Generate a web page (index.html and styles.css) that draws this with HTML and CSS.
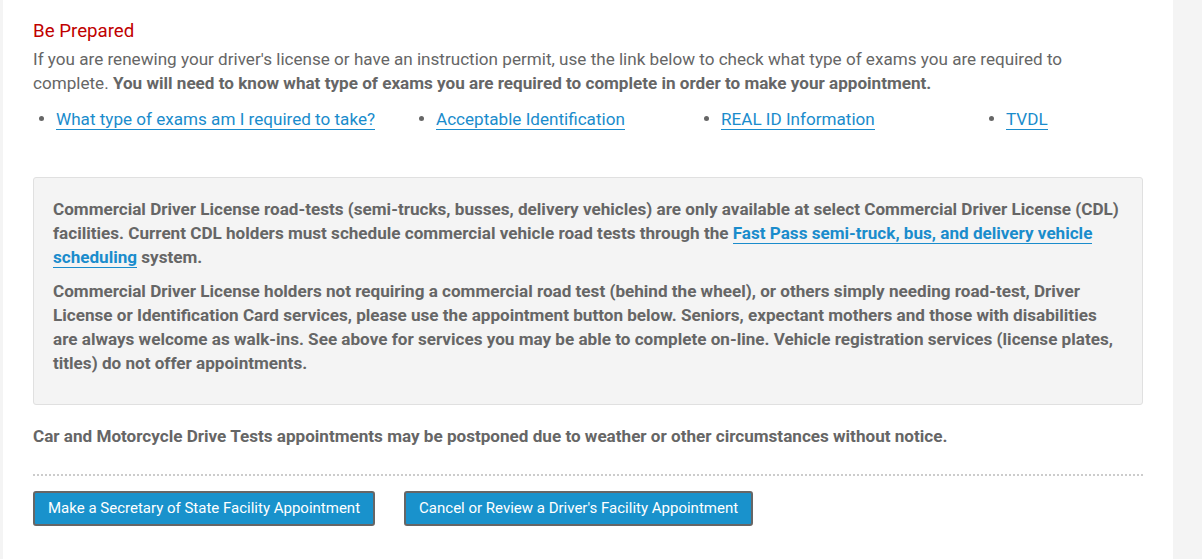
FILE: index.html
```html
<!DOCTYPE html>
<html>
<head>
<meta charset="utf-8">
<link rel="stylesheet" href="styles.css">
</head>
<body>
<div class="page">
  <h2 class="title">Be Prepared</h2>
  <p class="intro">If you are renewing your driver's license or have an instruction permit, use the link below to check what type of exams you are required to complete. <strong>You will need to know what type of exams you are required to complete in order to make your appointment.</strong></p>
  <ul class="links">
    <li><a href="#">What type of exams am I required to take?</a></li>
    <li><a href="#">Acceptable Identification</a></li>
    <li><a href="#">REAL ID Information</a></li>
    <li><a href="#">TVDL</a></li>
  </ul>
  <div class="notice">
    <p>Commercial Driver License road-tests (semi-trucks, busses, delivery vehicles) are only available at select Commercial Driver License (CDL) facilities. Current CDL holders must schedule commercial vehicle road tests through the <a href="#">Fast Pass semi-truck, bus, and delivery vehicle scheduling</a> system.</p>
    <p>Commercial Driver License holders not requiring a commercial road test (behind the wheel), or others simply needing road-test, Driver License or Identification Card services, please use the appointment button below. Seniors, expectant mothers and those with disabilities are always welcome as walk-ins. See above for services you may be able to complete on-line. Vehicle registration services (license plates, titles) do not offer appointments.</p>
  </div>
  <p class="warning">Car and Motorcycle Drive Tests appointments may be postponed due to weather or other circumstances without notice.</p>
  <div class="actions">
    <a class="btn" href="#">Make a Secretary of State Facility Appointment</a>
    <a class="btn" href="#">Cancel or Review a Driver's Facility Appointment</a>
  </div>
</div>
</body>
</html>
```

FILE: styles.css
```css
html, body {
  margin: 0;
  padding: 0;
}
body {
  background: #f4f4f4;
  font-family: Roboto, "Liberation Sans", sans-serif;
  font-size: 17.1px;
  line-height: 24px;
  color: #666;
  height: 559px;
  overflow: hidden;
}
.page {
  margin-left: 3px;
  width: 1110px;
  padding: 19px 30px 40px;
  background: #fff;
  min-height: 500px;
}
.title {
  margin: 0;
  font-size: 18.7px;
  font-weight: 400;
  line-height: 24px;
  color: #c00000;
}
.intro {
  margin: 4px 0 0;
  padding-right: 40px;
}
.intro strong {
  font-weight: 700;
}
.links {
  list-style: none;
  margin: 14px 0 0;
  padding: 0;
  display: grid;
  grid-template-columns: 380px 285px 285px auto;
}
.links li {
  display: flex;
  align-items: baseline;
  padding-left: 0;
}
.links li::before {
  content: "";
  width: 5px;
  height: 5px;
  border-radius: 50%;
  background: #666;
  margin: 0 12px 0 6px;
  flex: none;
  transform: translateY(-4px);
}
a {
  color: #1a8ccc;
  text-decoration: none;
  border-bottom: 1px solid #1a8ccc;
}
.links a {
  line-height: 20px;
}
.notice {
  margin-top: 47px;
  background: #f4f4f4;
  border: 1px solid #e0e0e0;
  border-radius: 3px;
  padding: 19px 22px 19px 19px;
  font-weight: 700;
}
.notice p {
  margin: 0 0 10px;
}
.notice a {
  line-height: 20px;
}
.warning {
  margin: 19px 0 0;
  font-weight: 700;
}
.actions {
  margin-top: 26px;
  padding-top: 15px;
  border-top: 2px dotted #ccc;
  display: flex;
  gap: 29px;
}
.btn {
  display: inline-block;
  background: #1992cc;
  color: #fff;
  border: 2px solid #666;
  border-radius: 3px;
  font-size: 15px;
  line-height: 19px;
  padding: 6px 13px;
  font-weight: 400;
}
```
